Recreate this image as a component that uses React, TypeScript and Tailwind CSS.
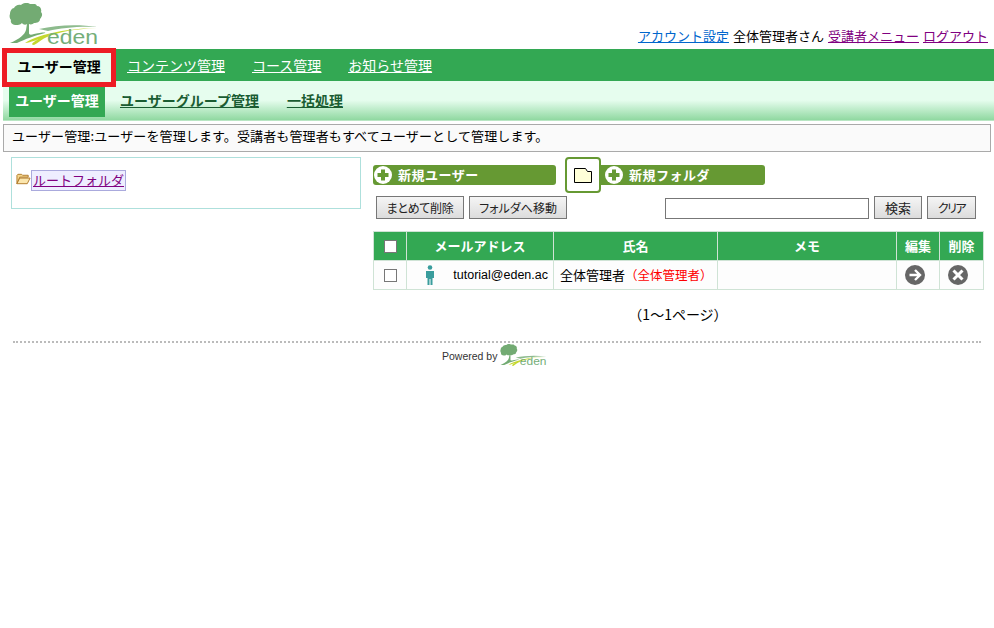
import React from 'react';

const font = { fontFamily: '"Noto Sans CJK JP", "Liberation Sans", sans-serif' };

const EdenLogo = ({ className }: { className: string }) => (
  <svg viewBox="0 0 92 44" className={className}>
    <path d="M23 1c-3-2-7-1-9 1-3-1-6 1-7 3-2 0-4 3-4 6-1 2 0 5 1 6-1 3 2 5 5 5 2 0 4 0 6-2 1 2 4 2 5 1l-1 6c-1 4-6 9-16 13h7c9-4 16-7 28-10 2-1-7 0-11 1-3 1-5 1-5-1l0-9c2 1 4 0 5-1 3 0 6-1 6-4 2-2 3-5 1-7 1-3-1-6-4-6-1-2-2-2-3-2z" fill="#73ab73" />
    <path d="M18 40c12-8 36-14 72-15-24 1-38 4-50 9-5 2-9 6-13 8-4 0-1-3 3-5 3-2-4 2-12 3z" fill="#c4d82e" />
    <path d="M32 26c18-4 38-5 59-2-20-1-36 1-50 4z" fill="#8dbb8d" />
    <text x="40" y="41" fontSize="21" fill="#74ae78" fontFamily='"Liberation Sans", sans-serif' textLength="51" lengthAdjust="spacingAndGlyphs">eden</text>
  </svg>
);

const GreenButton = ({ label, className }: { label: string; className: string }) => (
  <div className={`h-5 rounded-[3px] bg-[#669933] flex items-center text-white font-bold text-[13px] ${className}`}>
    <svg viewBox="0 0 18 18" className="w-[18px] h-[18px] mr-[6px] shrink-0">
      <circle cx="9" cy="9" r="9" fill="#fff" />
      <path d="M7 3.5h4V7h3.5v4H11v3.5H7V11H3.5V7H7z" fill="#669933" />
    </svg>
    <span className="tracking-[0.5px] pb-[1px]">{label}</span>
  </div>
);

const GrayButton = ({ label, className }: { label: string; className: string }) => (
  <button className={`h-[23px] border border-[#777] bg-gradient-to-b from-[#f5f5f5] to-[#dcdcdc] text-[#222] [font-feature-settings:'palt'] ${className}`}>
    {label}
  </button>
);

export default function App() {
  return (
    <div className="w-[994px] h-[628px] bg-white text-[13px] text-black overflow-hidden" style={font}>
      <div className="h-[49px] pl-[7px] pr-[6px] flex justify-between">
        <EdenLogo className="w-[92px] h-[44px] mt-[3px]" />
        <div className="self-end pb-[4px] leading-[18px] flex gap-[4px]">
          <a href="#" className="underline text-[#0066cc]">アカウント設定</a>
          <span>全体管理者さん</span>
          <a href="#" className="underline text-[#800080]">受講者メニュー</a>
          <a href="#" className="underline text-[#800080]">ログアウト</a>
        </div>
      </div>

      <div className="ml-[3px] h-8 bg-[#33a853] flex items-center text-[14px]">
        <a href="#" className="-ml-[1px] w-[114px] h-[39px] -mt-[-5px] border-[5px] border-[#ed1c24] bg-[#e6fdee] flex items-center justify-center font-bold relative text-[14px] text-black pb-[2px]">ユーザー管理</a>
        <div className="flex gap-[27px] ml-[11px] text-white underline">
          <a href="#">コンテンツ管理</a>
          <a href="#">コース管理</a>
          <a href="#">お知らせ管理</a>
        </div>
      </div>

      <div className="ml-[3px] h-10 pl-[6px] pt-[6px] bg-[linear-gradient(#e6fdee_0,#e6fdee_48%,#8fd8a0_98%,#fff_100%)] flex items-start font-bold text-[#1a5c32] text-[14px]">
        <a href="#" className="w-[96px] h-[30px] pb-[3px] bg-[#33a853] text-white flex items-center justify-center">ユーザー管理</a>
        <div className="flex gap-[28px] ml-[15px] h-[30px] pb-[3px] items-center underline">
          <a href="#">ユーザーグループ管理</a>
          <a href="#">一括処理</a>
        </div>
      </div>

      <div className="mx-[3px] mt-[3px] h-[28px] border border-[#aaa] bg-[#fafafa] pl-[8px] pb-[4px] flex items-center tracking-[0.12px]">
        ユーザー管理:ユーザーを管理します。受講者も管理者もすべてユーザーとして管理します。
      </div>

      <div className="flex mt-[5px] pl-[11px] pr-[11px]">
        <div className="w-[350px] h-[52px] border border-[#aee0dc] pt-[12px] pl-[4px] flex items-start shrink-0">
          <svg viewBox="0 0 16 12" className="w-[15px] h-[12px] mt-[3px] shrink-0">
            <path d="M1 11V2l1-1h4l1 1h6v2H4L1 11z" fill="#f5d78e" stroke="#b07a2a" />
            <path d="M1 11l3-6h11l-3 6z" fill="#fbe6ae" stroke="#b07a2a" />
          </svg>
          <a href="#" className="h-[21px] border border-[#aaaadd] bg-[#eeeeff] px-[1px] text-[13px] leading-[17px] text-[#800080] underline">ルートフォルダ</a>
        </div>

        <div className="ml-[12px] w-[610px]">
          <div className="flex items-center h-9">
            <GreenButton label="新規ユーザー" className="w-[183px] pl-[1px]" />
            <div className="ml-[9px] w-9 h-9 rounded-[4px] border-2 border-[#669933] bg-white flex items-center justify-center shrink-0">
              <svg viewBox="0 0 18 15" className="w-[18px] h-[15px]">
                <path d="M.5 14.5V.5h11l2 3h4v11z" fill="#ffffd8" stroke="#000" />
              </svg>
            </div>
            <GreenButton label="新規フォルダ" className="w-[164px] rounded-l-none pl-[4px]" />
          </div>

          <div className="flex items-end h-[26px] pl-[3px]">
            <GrayButton label="まとめて削除" className="w-[88px] text-[12px] tracking-[-0.3px]" />
            <GrayButton label="フォルダへ移動" className="w-[98px] ml-[5px] text-[12px]" />
            <input className="w-[204px] h-[21px] border border-[#777] ml-[98px] bg-white" />
            <GrayButton label="検索" className="w-[48px] ml-[5px] text-[13px]" />
            <GrayButton label="クリア" className="w-[49px] ml-[5px] text-[12px] tracking-[-1.5px]" />
          </div>

          <table className="mt-[12px] w-[610px] table-fixed border-collapse">
            <colgroup>
              <col className="w-[33px]" />
              <col className="w-[147px]" />
              <col className="w-[164px]" />
              <col className="w-[179px]" />
              <col className="w-[43px]" />
              <col className="w-[44px]" />
            </colgroup>
            <thead>
              <tr className="h-[29px] bg-[#33a853] text-white font-bold">
                <th className="border border-[#cfe3d5]"><div className="w-[13px] h-[13px] mx-auto bg-white border border-[#777]" /></th>
                <th className="border border-[#cfe3d5]">メールアドレス</th>
                <th className="border border-[#cfe3d5]">氏名</th>
                <th className="border border-[#cfe3d5]">メモ</th>
                <th className="border border-[#cfe3d5]">編集</th>
                <th className="border border-[#cfe3d5]">削除</th>
              </tr>
            </thead>
            <tbody>
              <tr className="h-[29px] bg-[#fdfdfd]">
                <td className="border border-[#cfe3d5]"><div className="w-[13px] h-[13px] mx-auto bg-white border border-[#777]" /></td>
                <td className="border border-[#cfe3d5] pr-[5px]">
                  <div className="flex items-center justify-between pl-[18px]">
                    <svg viewBox="0 0 10 20" className="w-[10px] h-[20px]">
                      <circle cx="5" cy="2.5" r="2.3" fill="#3a9d9d" />
                      <path d="M1 6h8v7H7.5v7h-2v-6h-1v6h-2v-7H1z" fill="#3a9d9d" />
                    </svg>
                    <span className="text-[12.5px]" style={{ fontFamily: '"Liberation Sans", sans-serif' }}>tutorial@eden.ac</span>
                  </div>
                </td>
                <td className="border border-[#cfe3d5] pl-[6px]">全体管理者<span className="text-[#ff0000] text-[12.5px]">（全体管理者）</span></td>
                <td className="border border-[#cfe3d5]"></td>
                <td className="border border-[#cfe3d5] pl-[8px]">
                  <svg viewBox="0 0 20 20" className="w-5 h-5 block">
                    <circle cx="10" cy="10" r="10" fill="#666" />
                    <path d="M4.5 10h10M10 5l5 5-5 5" fill="none" stroke="#fff" strokeWidth="2.4" />
                  </svg>
                </td>
                <td className="border border-[#cfe3d5] pl-[8px]">
                  <svg viewBox="0 0 20 20" className="w-5 h-5 block">
                    <circle cx="10" cy="10" r="10" fill="#666" />
                    <path d="M5.5 5.5l9 9M14.5 5.5l-9 9" fill="none" stroke="#fff" strokeWidth="3" />
                  </svg>
                </td>
              </tr>
            </tbody>
          </table>

          <div className="mt-[14px] text-center leading-[20px] text-[14px]">（1～1ページ）</div>
        </div>
      </div>

      <div className="mx-[13px] mt-[17px] border-t-2 border-dotted border-[#bbb] w-[968px]" />
      <div className="flex items-start pl-[442px] mt-[1px]">
        <span className="text-[10.5px] text-[#333] mt-[5px]" style={{ fontFamily: '"Liberation Sans", sans-serif' }}>Powered by</span>
        <EdenLogo className="w-[48px] h-[23px] ml-[2px]" />
      </div>
    </div>
  );
}
